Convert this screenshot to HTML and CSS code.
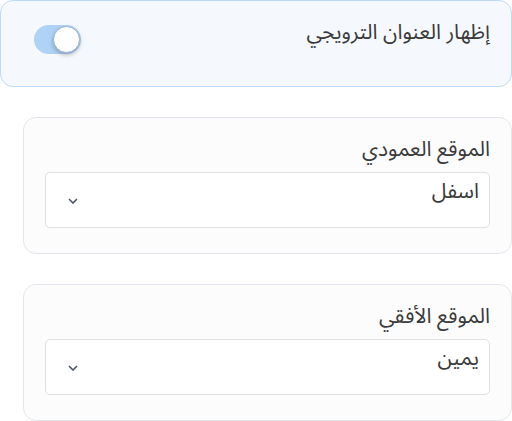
FILE: index.html
```html
<!DOCTYPE html>
<html lang="ar" dir="rtl">
<head>
<meta charset="utf-8">
<link rel="stylesheet" href="styles.css">
</head>
<body>
<div class="stack">
  <div class="promo">
    <div class="promo-row">
      <span class="promo-label">إظهار العنوان الترويجي</span>
      <span class="switch" aria-checked="true" role="switch"><span class="knob"></span></span>
    </div>
  </div>
  <div class="field">
    <div class="field-label">الموقع العمودي</div>
    <div class="select">
      <span class="select-value">اسفل</span>
      <svg class="chev" width="10" height="6" viewBox="0 0 10 6"><path d="M1 1 L5 5 L9 1" fill="none" stroke="#4b5563" stroke-width="1.6"/></svg>
    </div>
  </div>
  <div class="field">
    <div class="field-label">الموقع الأفقي</div>
    <div class="select">
      <span class="select-value">يمين</span>
      <svg class="chev" width="10" height="6" viewBox="0 0 10 6"><path d="M1 1 L5 5 L9 1" fill="none" stroke="#4b5563" stroke-width="1.6"/></svg>
    </div>
  </div>
</div>
</body>
</html>
```
FILE: styles.css
```css
html, body {
  margin: 0;
  padding: 0;
  background: #ffffff;
}
body {
  font-family: "Noto Sans Arabic", "DejaVu Sans", sans-serif;
  color: #3a3a3a;
  width: 512px;
}
.stack {
  display: flex;
  flex-direction: column;
  gap: 30px;
}
.promo {
  box-sizing: border-box;
  height: 87px;
  border: 1px solid #bcdaf9;
  background: #f5f9fe;
  border-radius: 13px;
  padding: 16px 21px 0 33px;
}
.promo-row {
  display: flex;
  justify-content: space-between;
  align-items: flex-start;
}
.promo-label {
  font-size: 21px;
  line-height: 30px;
}
.switch {
  position: relative;
  display: block;
  width: 47px;
  height: 29px;
  margin-top: 8px;
  border-radius: 15px;
  background: #afd2f7;
}
.knob {
  position: absolute;
  top: 1px;
  left: 19px;
  width: 27px;
  height: 27px;
  border-radius: 50%;
  background: #ffffff;
  border: 1px solid #9fb4cc;
  box-sizing: border-box;
  box-shadow: 0 2px 4px rgba(0,0,0,0.25);
}
.field {
  box-sizing: border-box;
  height: 137px;
  margin-left: 23px;
  border: 1px solid #e2e6ec;
  background: #fcfcfd;
  border-radius: 13px;
  padding: 16px 21px 0 21px;
}
.field-label {
  font-size: 21px;
  line-height: 30px;
  margin-bottom: 8px;
}
.select {
  box-sizing: border-box;
  height: 56px;
  border: 1px solid #dde1e6;
  border-radius: 5px;
  background: #ffffff;
  display: flex;
  justify-content: space-between;
  align-items: flex-start;
  padding: 3px 10px 0 22px;
}
.select-value {
  font-size: 21px;
  line-height: 30px;
}
.chev {
  margin-top: 22px;
}
```
